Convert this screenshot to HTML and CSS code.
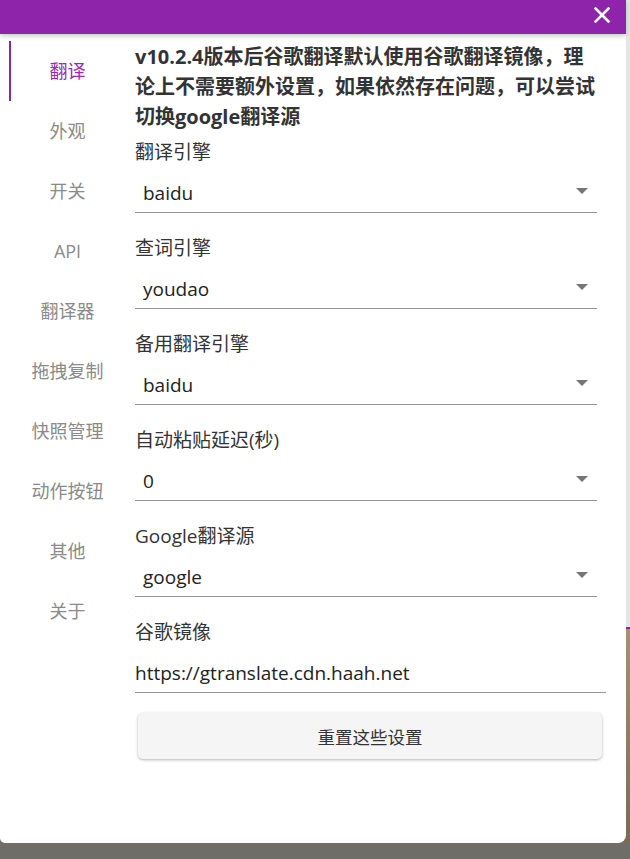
FILE: index.html
```html
<!DOCTYPE html>
<html>
<head>
<meta charset="utf-8" />
<title>设置</title>
<link rel="stylesheet" href="styles.css">
</head>
<body>
<div class="panel">
    <div class="topbar">
        <span class="close">
            <svg width="16" height="16" viewBox="0 0 16 16"><path d="M1.5 1.5L14.5 14.5M14.5 1.5L1.5 14.5" stroke="#fff" stroke-width="2.6" stroke-linecap="square" /></svg>
        </span>
    </div>
    <div class="main">
        <ul class="side">
            <li class="active">翻译</li>
            <li>外观</li>
            <li>开关</li>
            <li>API</li>
            <li>翻译器</li>
            <li>拖拽复制</li>
            <li>快照管理</li>
            <li>动作按钮</li>
            <li>其他</li>
            <li>关于</li>
        </ul>
        <div class="content">
            <p class="notice">v10.2.4版本后谷歌翻译默认使用谷歌翻译镜像，理论上不需要额外设置，如果依然存在问题，可以尝试切换google翻译源</p>
            <div class="field">
                <div class="label">翻译引擎</div>
                <div class="select">baidu<i class="arrow"></i></div>
            </div>
            <div class="field">
                <div class="label">查词引擎</div>
                <div class="select">youdao<i class="arrow"></i></div>
            </div>
            <div class="field">
                <div class="label">备用翻译引擎</div>
                <div class="select">baidu<i class="arrow"></i></div>
            </div>
            <div class="field">
                <div class="label">自动粘贴延迟(秒)</div>
                <div class="select">0<i class="arrow"></i></div>
            </div>
            <div class="field">
                <div class="label">Google翻译源</div>
                <div class="select">google<i class="arrow"></i></div>
            </div>
            <div class="field">
                <div class="label">谷歌镜像</div>
                <div class="textinput">https://gtranslate.cdn.haah.net</div>
            </div>
            <button class="reset">重置这些设置</button>
        </div>
    </div>
</div>
</body>
</html>
```

FILE: styles.css
```css
html, body {
    margin:0;
    height:100%;
}
body {
    font-family:"Open Sans", "Noto Sans CJK SC", sans-serif;
    color:#333;
    background:linear-gradient(to bottom, #e6e6e6 0, #e6e6e6 627px, #8e24aa 627px, #8e24aa 629px, #a89070 629px, #7d6a55 843px, #6e6d68 843px);
    overflow:hidden;
}
.panel {/*弹出设置面板*/
    width:626px;
    height:843px;
    background:#fff;
    border-radius:0 0 8px 5px;
}
.topbar {
    height:34px;
    background:#8e24aa;
    box-shadow:0 2px 5px rgba(0,0,0,.22);
    display:flex;
    justify-content:flex-end;
    align-items:center;
    position:relative;
}
.close {
    width:16px;
    height:16px;
    margin:-5px 16px 0 0;
    display:flex;
}
.main {
    display:flex;
}
.side {/*左侧菜单*/
    list-style:none;
    margin:7px 0 0 9px;
    padding:0;
    width:115px;
}
.side li {
    height:60px;
    line-height:60px;
    text-align:center;
    font-size:18px;
    color:#8a8a8a;
    border-left:2px solid transparent;
}
.side li.active {
    color:#9c27b0;
    border-left-color:#8e24aa;
}
.content {
    width:462px;
    margin-left:11px;
    padding-top:8px;
}
.notice {
    margin:0;
    font-size:20px;
    font-weight:bold;
    line-height:30px;
    color:#333;
}
.field {
    margin-top:5px;
}
.field + .field {
    margin-top:20px;
}
.label {
    font-size:19px;
    line-height:30px;
    color:#333;
}
.select, .textinput {/*下拉框、输入框*/
    height:40px;
    line-height:42px;
    margin-top:5px;
    font-size:19px;
    color:#222;
    border-bottom:1px solid #949494;
    position:relative;
}
.select {
    padding-left:8px;
}
.textinput {
    width:471px;
}
.arrow {
    position:absolute;
    right:9px;
    top:16px;
    width:0;
    height:0;
    border-left:6px solid transparent;
    border-right:6px solid transparent;
    border-top:6px solid #757575;
}
.reset {/*重置按钮*/
    display:block;
    margin:20px 0 0 3px;
    width:464px;
    height:46px;
    border:none;
    border-radius:5px;
    background:#f5f5f5;
    box-shadow:0 1px 3px rgba(0,0,0,.3);
    font-family:"Open Sans", "Noto Sans CJK SC", sans-serif;
    font-size:17.5px;
    color:#333;
}
```
